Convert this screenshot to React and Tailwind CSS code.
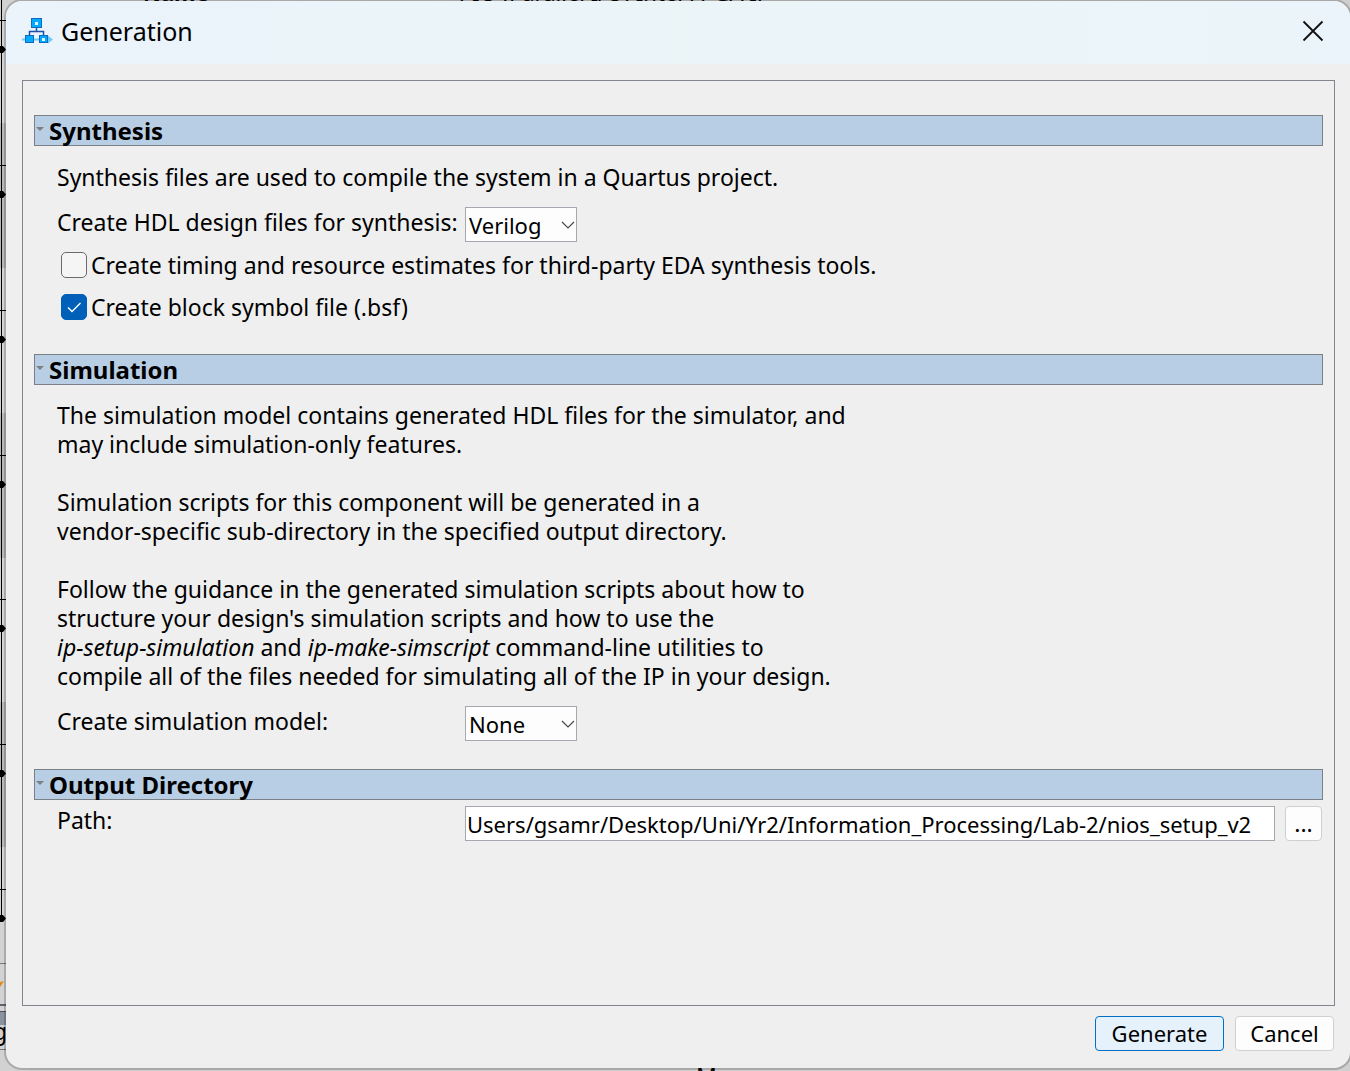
import { useId } from "react";

const ticks = [20, 165, 310, 455, 599, 744, 889];
const dots = [49, 194, 339, 484, 628, 773, 918];
const bands = [123, 413, 702];

function ConnectionStrip() {
  return (
    <svg className="absolute left-0 top-0 h-[1071px] w-[30px]" viewBox="0 0 30 1071" aria-hidden="true">
      <rect width="30" height="1071" fill="#d2d2d2" />
      {bands.map((y) => (
        <rect key={y} y={y} width="30" height="145" fill="#b8b8b8" />
      ))}
      <rect x="1" width="1" height="918" fill="#000" />
      {ticks.map((y) => (
        <rect key={y} y={y} width="6" height="1" fill="#000" />
      ))}
      {dots.map((y) => (
        <path key={y} d={`M0 ${y - 3}h3l3 3.5-3 3.5H0z`} fill="#000" />
      ))}
      <rect y="963" width="30" height="1" fill="#77797f" />
      <path d="M0 982l4-1-4 6z" fill="#e08a12" />
      <rect y="1004" width="30" height="2" fill="#5d646e" />
      <rect y="1011" width="30" height="14" fill="#8b939e" />
      <rect y="1011" width="30" height="1" fill="#4d535b" />
      <rect y="1049" width="30" height="1" fill="#77797f" />
    </svg>
  );
}

function HierarchyIcon() {
  return (
    <svg className="h-7 w-8 shrink-0" viewBox="0 0 32 28" aria-hidden="true">
      <path d="M0 22.500h28" stroke="#6fcbf5" strokeWidth="2" />
      <path d="M26 18.500l5 4-5 4z" fill="#6fcbf5" />
      <path d="M14.500 10v5M7.500 19v-4.500h14V19" fill="none" stroke="#1c4fa8" strokeWidth="1.500" />
      <rect x="9.500" y="1.500" width="10" height="9" fill="#00aaff" stroke="#1468bd" />
      <rect x="3.500" y="18.500" width="8" height="7" fill="#00aaff" stroke="#1468bd" />
      <rect x="17.500" y="18.500" width="8" height="7" fill="#00aaff" stroke="#1468bd" />
      <rect x="13" y="5" width="3" height="3" fill="#e4f6ff" />
      <rect x="20" y="21" width="3" height="3" fill="#e4f6ff" />
    </svg>
  );
}

function Section({ title, children }) {
  return (
    <section>
      <h2>
        <button
          type="button"
          className="flex h-[31px] w-full items-center border border-[#7b7f86] bg-[#b8cee5] pl-px text-left text-[24px] leading-7 font-bold"
        >
          <svg className="mr-[5px] mb-[3px] h-2 w-2" viewBox="0 0 8 8" aria-hidden="true">
            <path d="M0 2h8L4 6z" fill="#7d7f82" />
          </svg>
          {title}
        </button>
      </h2>
      <div className="pl-[23px]">{children}</div>
    </section>
  );
}

function SelectRow({ label, options }) {
  const id = useId();
  return (
    <div className="flex items-start">
      <label htmlFor={id} className="w-[408px] shrink-0 leading-[31px]">
        {label}
      </label>
      <div className="relative h-[35px] w-28 text-[22px]">
        <select id={id} className="h-full w-full appearance-none border border-[#a7a8af] bg-[#fdfdfd] pl-[3px] leading-8">
          {options.map((o) => (
            <option key={o}>{o}</option>
          ))}
        </select>
        <svg className="pointer-events-none absolute top-3 right-[2px] h-3 w-[14px]" viewBox="0 0 14 12" aria-hidden="true">
          <path d="M1 3l6 6 6-6" fill="none" stroke="#4a4a4a" strokeWidth="1.200" />
        </svg>
      </div>
    </div>
  );
}

function CheckRow({ label, checked }) {
  return (
    <label className="flex h-[42px] items-center gap-1 pl-1">
      <span className="relative h-[26px] w-[26px]">
        <input
          type="checkbox"
          defaultChecked={checked}
          className="peer block h-full w-full appearance-none rounded-[5px] border border-[#6a6a6a] bg-[#f5f5f5] checked:border-[#005fb8] checked:bg-[#005fb8]"
        />
        <svg className="pointer-events-none absolute inset-0 hidden h-full w-full peer-checked:block" viewBox="0 0 26 26" aria-hidden="true">
          <path d="M7 13.500l4 4 8.500-8.500" fill="none" stroke="#fff" strokeWidth="1.400" />
        </svg>
      </span>
      <span className="leading-[31px]">{label}</span>
    </label>
  );
}

export default function App() {
  return (
    <div className="relative flex min-h-screen overflow-hidden bg-[#cfcfcf] pt-px pb-[3px] pl-[6px] font-['Noto_Sans','Open_Sans',sans-serif] text-[23px] leading-[29px] text-black">
      <ConnectionStrip />
      <div aria-hidden="true" className="absolute top-[-22px] left-[143px] flex gap-[250px] text-[22px] whitespace-nowrap">
        <b>Name</b>
        <span>PIO (Parallel I/O) Intel FPGA IP</span>
      </div>
      <span aria-hidden="true" className="absolute top-[1017px] left-[-7px]">g</span>
      <span aria-hidden="true" className="absolute top-[1062px] left-[696px]">M</span>

      <main className="relative flex flex-1 flex-col rounded-[16px] bg-[#efefef] shadow-[0_0_0_2px_#00000030]">
        <header className="flex h-[63px] items-center rounded-t-[16px] bg-linear-to-r from-[#ebf3fb] via-[#ebf5f8] to-[#ebf4fa] pr-[26px] pb-[3px] pl-4">
          <HierarchyIcon />
          <h1 className="ml-[7px] flex-1 text-[25px] leading-8">Generation</h1>
          <button type="button" aria-label="Close" className="h-[22px] w-[22px]">
            <svg viewBox="0 0 22 22" aria-hidden="true">
              <path d="M1.500 1.500l19 19M20.500 1.500l-19 19" stroke="#111" strokeWidth="1.800" />
            </svg>
          </button>
        </header>

        <form className="flex flex-1 flex-col pt-4 pr-[15px] pb-[17px] pl-4" onSubmit={(e) => e.preventDefault()}>
          <div className="flex-1 border border-[#80858f] px-[11px] pt-[34px]">
            <Section title="Synthesis">
              <p className="pt-[17px] pb-[15px]">Synthesis files are used to compile the system in a Quartus project.</p>
              <SelectRow label="Create HDL design files for synthesis:" options={["Verilog", "VHDL", "None"]} />
              <div className="pt-[2px] pb-[26px]">
                <CheckRow label="Create timing and resource estimates for third-party EDA synthesis tools." />
                <CheckRow label="Create block symbol file (.bsf)" checked />
              </div>
            </Section>

            <Section title="Simulation">
              <div className="flex flex-col gap-[29px] pt-4 pb-[15px]">
                <p>
                  The simulation model contains generated HDL files for the simulator, and
                  <br />
                  may include simulation-only features.
                </p>
                <p>
                  Simulation scripts for this component will be generated in a
                  <br />
                  vendor-specific sub-directory in the specified output directory.
                </p>
                <p>
                  Follow the guidance in the generated simulation scripts about how to
                  <br />
                  structure your design's simulation scripts and how to use the
                  <br />
                  <i>ip-setup-simulation</i> and <i>ip-make-simscript</i> command-line utilities to
                  <br />
                  compile all of the files needed for simulating all of the IP in your design.
                </p>
              </div>
              <div className="pb-7">
                <SelectRow label="Create simulation model:" options={["None", "Verilog", "VHDL"]} />
              </div>
            </Section>

            <Section title="Output Directory">
              <div className="flex items-start pt-[6px]">
                <label htmlFor="path" className="w-[408px] shrink-0">
                  Path:
                </label>
                <input
                  id="path"
                  type="text"
                  defaultValue="Users/gsamr/Desktop/Uni/Yr2/Information_Processing/Lab-2/nios_setup_v2"
                  className="h-[35px] min-w-0 flex-1 border border-[#a7a8af] bg-white px-px text-[22px]"
                />
                <button type="button" aria-label="Browse" className="mr-px ml-[10px] h-[35px] w-[37px] rounded-[4px] border border-[#d0d0d0] bg-[#fdfdfd]">
                  ...
                </button>
              </div>
            </Section>
          </div>

          <div className="flex justify-end gap-[11px] pt-[10px] pr-px text-[22px]">
            <button type="submit" className="h-[35px] w-[129px] rounded-[4px] border border-[#0070c8] bg-[#e5f1fb]">
              Generate
            </button>
            <button type="button" className="h-[35px] w-[99px] rounded-[4px] border border-[#d0d0d0] bg-[#fdfdfd]">
              Cancel
            </button>
          </div>
        </form>
      </main>
    </div>
  );
}
